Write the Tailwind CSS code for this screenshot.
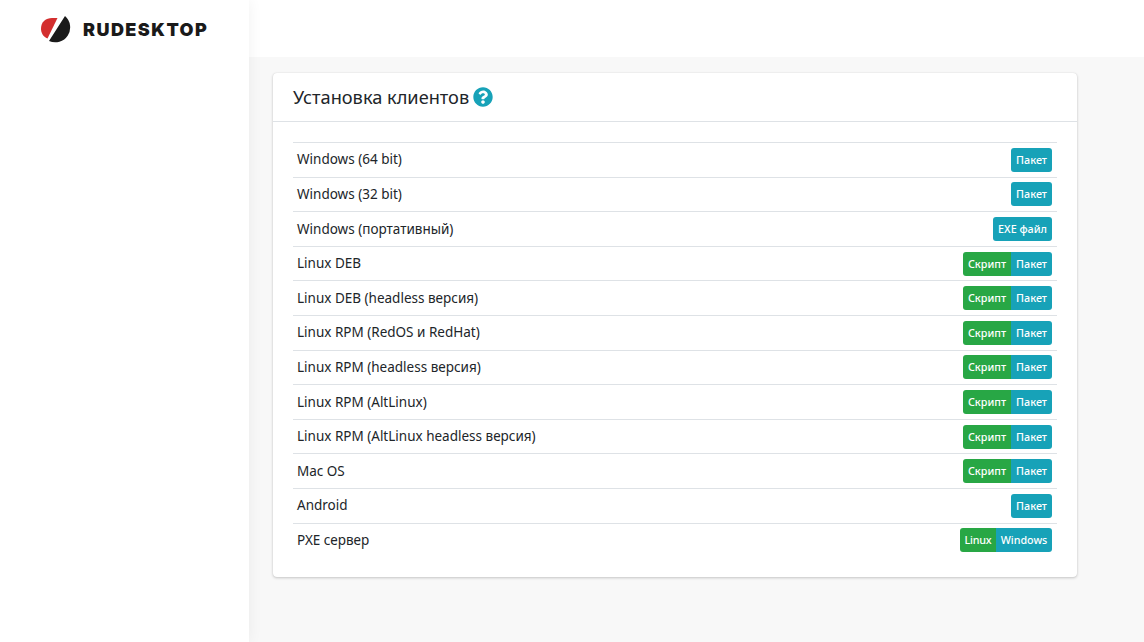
<!DOCTYPE html>
<html lang="ru"><head><meta charset="utf-8"><script src="https://cdn.jsdelivr.net/npm/@tailwindcss/browser@4"></script></head>
<body class="bg-[#f8f8f8] font-['Noto_Sans',sans-serif] text-[#212529]">
<div class="flex h-[642px] w-[1144px] overflow-hidden">
  <aside class="w-[249px] shrink-0 bg-white shadow-[0_0_14px_rgba(0,0,0,0.06)] z-10">
    <div class="flex items-center pl-[41px] pt-[16px] gap-[11px]">
      <svg width="31" height="28" viewBox="0 0 31 28"><path d="M16.500 2 L6.500 22.500 C2 20.500 0 17 0 12.500 C0 6 5 2 11 2 Z" fill="#d32f2f"/><path d="M24 0 A15 15 0 0 1 8 25 Z" fill="#1a1a1a"/></svg>
      <span class="font-['Inter',sans-serif] font-black text-[18px] leading-[26px] tracking-[1.450px] text-[#1a1a1a]">RUDESKTOP</span>
    </div>
  </aside>
  <div class="flex-1 flex flex-col">
    <header class="h-[57px] bg-white shrink-0"></header>
    <main class="pt-[16px] pl-[24px] pr-[67px]">
      <section class="h-[504px] bg-white rounded-[4px] shadow-[0_0_1px_rgba(0,0,0,0.125),0_1px_3px_rgba(0,0,0,0.2)]">
        <div class="h-[49px] border-b border-[#dee2e6] pl-[20px] flex items-center gap-[4px]">
          <h1 class="text-[18.200px] leading-[49px] font-normal">Установка клиентов</h1>
          <svg width="20" height="20" viewBox="0 0 512 512"><path fill="#17a2b8" d="M504 256c0 137-111 248-248 248S8 393 8 256C8 119 119 8 256 8s248 111 248 248zM262.700 90c-54.500 0-89.300 23-116.500 63.800-3.500 5.300-2.400 12.400 2.700 16.300l34.700 26.300c5.200 3.900 12.600 3 16.700-2.100 17.900-22.700 30.100-35.800 57.300-35.800 20.400 0 45.700 13.100 45.700 33 0 15-12.400 22.700-32.600 34-23.600 13.200-54.800 29.700-54.800 70.900V302c0 6.600 5.400 12 12 12h56c6.600 0 12-5.400 12-12v-1.300c0-28.600 83.500-29.800 83.500-107.100C377.400 135.400 317.100 90 262.700 90zM256 339c-25.500 0-46.200 20.700-46.200 46.200 0 25.500 20.700 46.200 46.200 46.200s46.200-20.700 46.200-46.200c0-25.500-20.700-46.200-46.200-46.200z"/></svg>
        </div>
        <div class="mx-[20px] mt-[20px] text-[13.500px]">
          <div class="h-[34.600px] border-t border-[#dee2e6] flex items-center justify-between pl-[4px] pr-[5px]"><span class="mb-[0.500px]">Windows (64 bit)</span><span class="flex"><a class="h-[24px] px-[5px] bg-[#17a2b8] rounded-[3px] text-white text-[10.750px] font-medium leading-[24px]">Пакет</a></span></div>
          <div class="h-[34.600px] border-t border-[#dee2e6] flex items-center justify-between pl-[4px] pr-[5px]"><span class="mb-[0.500px]">Windows (32 bit)</span><span class="flex"><a class="h-[24px] px-[5px] bg-[#17a2b8] rounded-[3px] text-white text-[10.750px] font-medium leading-[24px]">Пакет</a></span></div>
          <div class="h-[34.600px] border-t border-[#dee2e6] flex items-center justify-between pl-[4px] pr-[5px]"><span class="mb-[0.500px]">Windows (портативный)</span><span class="flex"><a class="h-[24px] px-[5px] bg-[#17a2b8] rounded-[3px] text-white text-[10.750px] font-medium leading-[24px]">EXE файл</a></span></div>
          <div class="h-[34.600px] border-t border-[#dee2e6] flex items-center justify-between pl-[4px] pr-[5px]"><span class="mb-[0.500px]">Linux DEB</span><span class="flex"><a class="h-[24px] px-[5px] bg-[#28a745] rounded-l-[3px] text-white text-[10.750px] font-medium leading-[24px]">Скрипт</a><a class="h-[24px] px-[5px] bg-[#17a2b8] rounded-r-[3px] text-white text-[10.750px] font-medium leading-[24px]">Пакет</a></span></div>
          <div class="h-[34.600px] border-t border-[#dee2e6] flex items-center justify-between pl-[4px] pr-[5px]"><span class="mb-[0.500px]">Linux DEB (headless версия)</span><span class="flex"><a class="h-[24px] px-[5px] bg-[#28a745] rounded-l-[3px] text-white text-[10.750px] font-medium leading-[24px]">Скрипт</a><a class="h-[24px] px-[5px] bg-[#17a2b8] rounded-r-[3px] text-white text-[10.750px] font-medium leading-[24px]">Пакет</a></span></div>
          <div class="h-[34.600px] border-t border-[#dee2e6] flex items-center justify-between pl-[4px] pr-[5px]"><span class="mb-[0.500px]">Linux RPM (RedOS и RedHat)</span><span class="flex"><a class="h-[24px] px-[5px] bg-[#28a745] rounded-l-[3px] text-white text-[10.750px] font-medium leading-[24px]">Скрипт</a><a class="h-[24px] px-[5px] bg-[#17a2b8] rounded-r-[3px] text-white text-[10.750px] font-medium leading-[24px]">Пакет</a></span></div>
          <div class="h-[34.600px] border-t border-[#dee2e6] flex items-center justify-between pl-[4px] pr-[5px]"><span class="mb-[0.500px]">Linux RPM (headless версия)</span><span class="flex"><a class="h-[24px] px-[5px] bg-[#28a745] rounded-l-[3px] text-white text-[10.750px] font-medium leading-[24px]">Скрипт</a><a class="h-[24px] px-[5px] bg-[#17a2b8] rounded-r-[3px] text-white text-[10.750px] font-medium leading-[24px]">Пакет</a></span></div>
          <div class="h-[34.600px] border-t border-[#dee2e6] flex items-center justify-between pl-[4px] pr-[5px]"><span class="mb-[0.500px]">Linux RPM (AltLinux)</span><span class="flex"><a class="h-[24px] px-[5px] bg-[#28a745] rounded-l-[3px] text-white text-[10.750px] font-medium leading-[24px]">Скрипт</a><a class="h-[24px] px-[5px] bg-[#17a2b8] rounded-r-[3px] text-white text-[10.750px] font-medium leading-[24px]">Пакет</a></span></div>
          <div class="h-[34.600px] border-t border-[#dee2e6] flex items-center justify-between pl-[4px] pr-[5px]"><span class="mb-[0.500px]">Linux RPM (AltLinux headless версия)</span><span class="flex"><a class="h-[24px] px-[5px] bg-[#28a745] rounded-l-[3px] text-white text-[10.750px] font-medium leading-[24px]">Скрипт</a><a class="h-[24px] px-[5px] bg-[#17a2b8] rounded-r-[3px] text-white text-[10.750px] font-medium leading-[24px]">Пакет</a></span></div>
          <div class="h-[34.600px] border-t border-[#dee2e6] flex items-center justify-between pl-[4px] pr-[5px]"><span class="mb-[0.500px]">Mac OS</span><span class="flex"><a class="h-[24px] px-[5px] bg-[#28a745] rounded-l-[3px] text-white text-[10.750px] font-medium leading-[24px]">Скрипт</a><a class="h-[24px] px-[5px] bg-[#17a2b8] rounded-r-[3px] text-white text-[10.750px] font-medium leading-[24px]">Пакет</a></span></div>
          <div class="h-[34.600px] border-t border-[#dee2e6] flex items-center justify-between pl-[4px] pr-[5px]"><span class="mb-[0.500px]">Android</span><span class="flex"><a class="h-[24px] px-[5px] bg-[#17a2b8] rounded-[3px] text-white text-[10.750px] font-medium leading-[24px]">Пакет</a></span></div>
          <div class="h-[34.600px] border-t border-[#dee2e6] flex items-center justify-between pl-[4px] pr-[5px]"><span class="mb-[0.500px]">PXE сервер</span><span class="flex"><a class="h-[24px] w-[36px] text-center tracking-[-0.200px] bg-[#28a745] rounded-l-[3px] text-white text-[10.750px] font-medium leading-[24px]">Linux</a><a class="h-[24px] w-[56px] text-center bg-[#17a2b8] rounded-r-[3px] text-white text-[10.750px] font-medium leading-[24px]">Windows</a></span></div>
        </div>
      </section>
    </main>
  </div>
</div>
</body></html>
